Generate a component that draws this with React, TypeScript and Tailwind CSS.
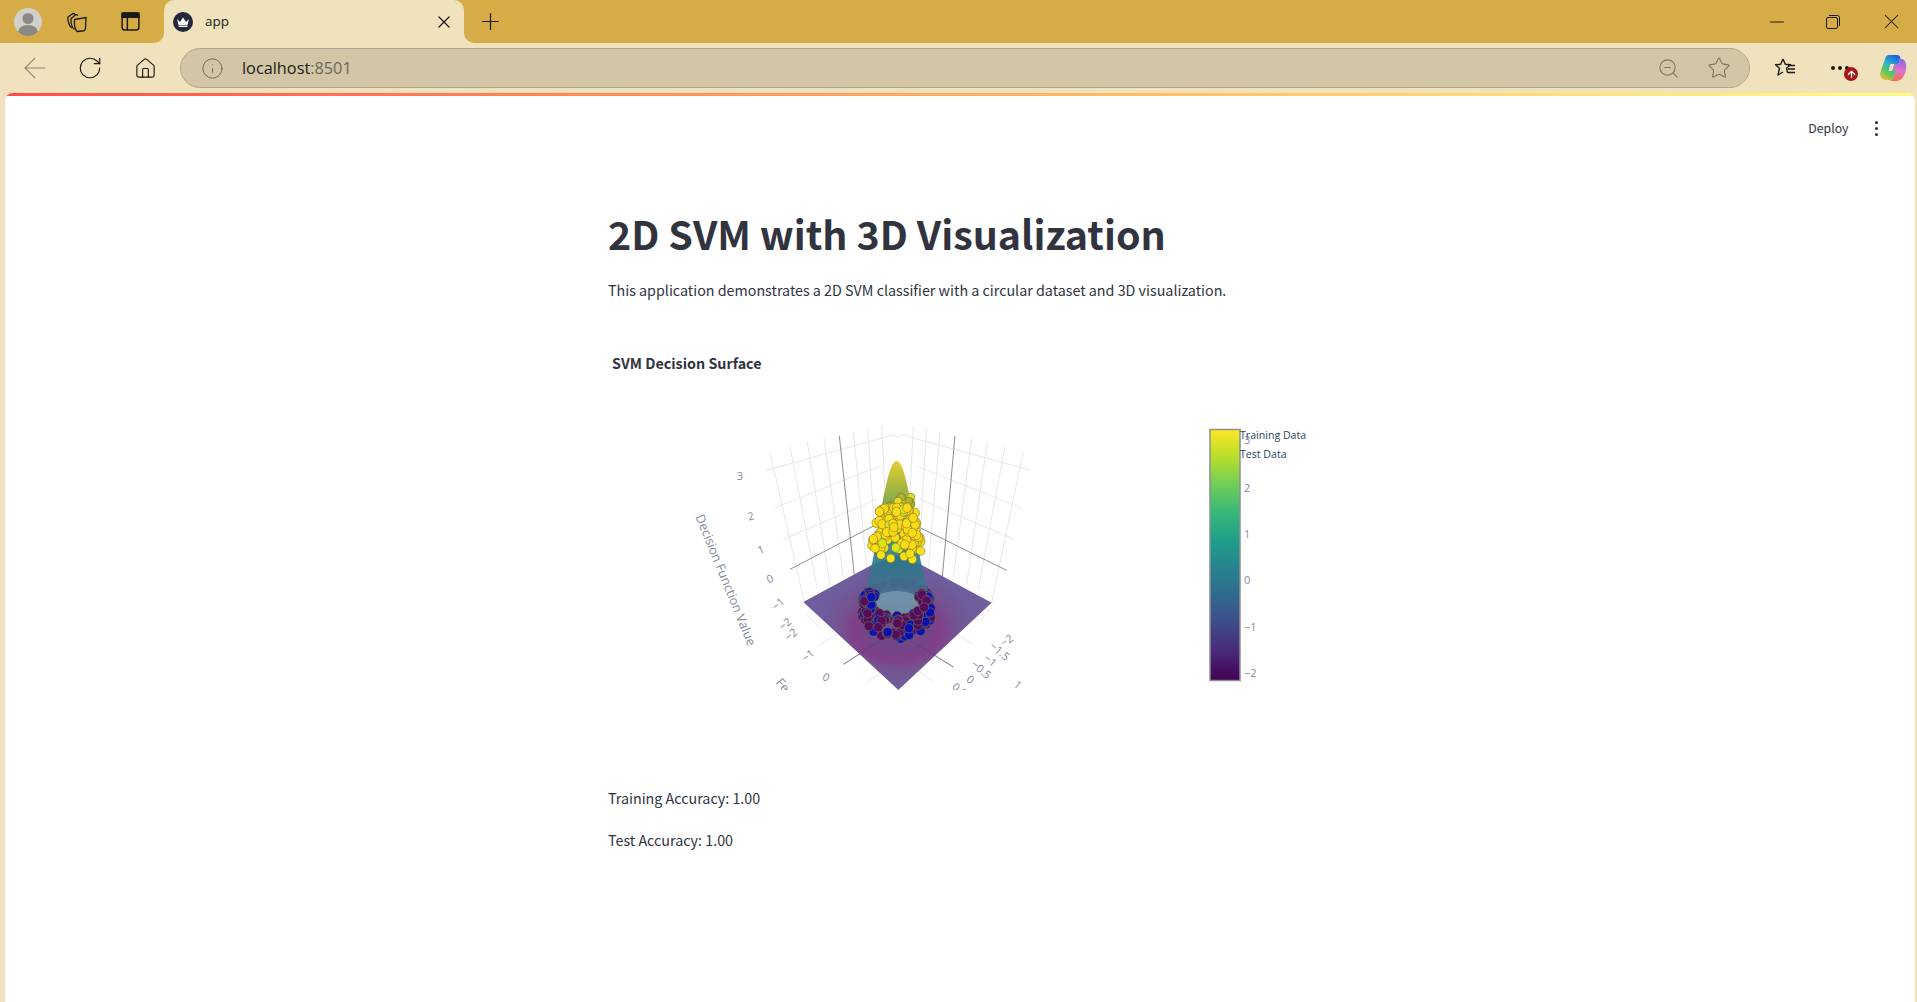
import { ArrowLeft, ArrowUp, Home, Info, Minus, Plus, RotateCw, Star, X, ZoomOut } from "lucide-react";

const viridis = ["#fde725", "#b5de2b", "#6ece58", "#35b779", "#1f9e89", "#26828e", "#31688e", "#3e4989", "#482878", "#440154"];

// small seeded generator so the scatter is the same on every load
function makeRandom(seed: number) {
  let s = seed;
  return () => {
    s = (s * 16807) % 2147483647;
    return (s - 1) / 2147483646;
  };
}

function coneHalf(y: number) {
  if (y < 150) return 0;
  if (y < 270) return 45 * Math.sqrt((y - 150) / 120);
  return 45 + ((y - 270) / 270) * 47;
}

const rnd = makeRandom(4242);
const yellowFaded = Array.from({ length: 12 }, () => {
  const y = 258 + rnd() * 28;
  return { x: 650 + (rnd() * 2 - 1) * 44, y };
});
const yellow = Array.from({ length: 135 }, () => {
  const y = 290 + Math.pow(rnd(), 1.2) * 125;
  const half = coneHalf(y) + 6;
  return { x: 650 + (rnd() * 2 - 1) * half, y, lime: rnd() > 0.88 };
});
const yellowLow = [
  [603, 432], [632, 442], [672, 436], [697, 445], [722, 420], [585, 412], [690, 428],
].map(([x, y]) => ({ x, y }));
const ringBack = Array.from({ length: 38 }, () => {
  const a = Math.PI * 0.98 + rnd() * Math.PI * 1.04;
  const r = 0.85 + rnd() * 0.2;
  return { x: 652 + Math.cos(a) * 100 * r, y: 565 + Math.sin(a) * 50 * r, blue: rnd() > 0.5 };
});
// band between the pale inner patch and the outer edge of the ring
const ringFront = Array.from({ length: 155 }, () => {
  const a = -0.7 + rnd() * (Math.PI + 1.4);
  const t = 0.05 + rnd() * 0.95;
  const x = 650 + Math.cos(a) * (72 + (108 - 72) * t);
  const y = 575 + 20 * t + Math.sin(a) * (35 + (92 - 35) * t);
  return { x, y, blue: rnd() > 0.6 };
});

type Tick = { t: string; x: number; y: number; r?: number };
const ticks: Tick[] = [
  { t: "3", x: 180, y: 208 },
  { t: "2", x: 213, y: 327, r: -15 },
  { t: "1", x: 243, y: 428, r: -20 },
  { t: "0", x: 270, y: 515, r: -20 },
  { t: "−1", x: 295, y: 590, r: -40 },
  { t: "−2", x: 316, y: 650, r: -40 },
  { t: "−2", x: 334, y: 682, r: -40 },
  { t: "−1", x: 385, y: 745, r: -40 },
  { t: "0", x: 438, y: 810, r: 30 },
  { t: "−2", x: 981, y: 700, r: -35 },
  { t: "−1.5", x: 958, y: 732, r: 40 },
  { t: "−1", x: 930, y: 760, r: 40 },
  { t: "−0.5", x: 903, y: 787, r: 40 },
  { t: "0", x: 870, y: 817, r: 40 },
  { t: "0.5", x: 838, y: 848, r: 40 },
  { t: "1", x: 1012, y: 833, r: 40 },
];

const gridLines = [
  // left wall, z levels
  [258, 178, 640, 72], [285, 290, 600, 165], [310, 385, 590, 265],
  // right wall, z levels
  [1052, 178, 668, 72], [1028, 293, 710, 165], [1003, 385, 720, 265],
  // left wall, uprights
  [270, 125, 372, 570], [330, 105, 412, 535], [382, 92, 450, 520], [432, 82, 490, 500], [520, 62, 560, 470], [563, 52, 590, 460], [605, 45, 625, 440],
  // right wall, uprights
  [1030, 122, 935, 575], [975, 105, 895, 535], [922, 92, 860, 520], [875, 82, 820, 500], [780, 62, 745, 470], [740, 52, 715, 460], [700, 45, 680, 440],
  // floor
  [380, 612, 420, 650], [418, 702, 470, 670], [560, 815, 625, 770], [935, 590, 900, 630], [880, 700, 830, 668], [760, 812, 700, 770],
  [640, 72, 655, 80], [668, 72, 655, 80],
];

const darkLines = [
  [478, 75, 525, 510], [825, 75, 785, 520], [330, 475, 580, 345], [720, 350, 980, 478],
];

function SurfacePlot() {
  return (
    <svg width="640" height="279" viewBox="0 0 640 279" className="block">
      <defs>
        <linearGradient id="bar" x1="0" y1="0" x2="0" y2="1">
          {viridis.map((c, i) => (
            <stop key={c} offset={i / 9} stopColor={c} />
          ))}
        </linearGradient>
        <linearGradient id="cone" x1="0" y1="150" x2="0" y2="570" gradientUnits="userSpaceOnUse">
          <stop offset="0" stopColor="#e3c81c" />
          <stop offset="0.2" stopColor="#98ad2b" />
          <stop offset="0.45" stopColor="#3f8f76" />
          <stop offset="0.7" stopColor="#27788a" />
          <stop offset="1" stopColor="#4f6f92" />
        </linearGradient>
        <radialGradient id="floor" cx="0.5" cy="0.55" r="0.55">
          <stop offset="0" stopColor="#6f4a88" />
          <stop offset="0.3" stopColor="#744488" />
          <stop offset="0.42" stopColor="#803f8a" />
          <stop offset="0.54" stopColor="#75528f" />
          <stop offset="0.75" stopColor="#6f5c9c" />
          <stop offset="1" stopColor="#6f5e9e" />
        </radialGradient>
        <clipPath id="scene">
          <rect x="0" y="0" width="1200" height="837" />
        </clipPath>
      </defs>

      <g transform="scale(0.33333)" clipPath="url(#scene)">
        {gridLines.map(([a, b, c, d], i) => (
          <line key={i} x1={a} y1={b} x2={c} y2={d} stroke="#e6e7ea" strokeWidth="3" />
        ))}
        {darkLines.map(([a, b, c, d], i) => (
          <line key={i} x1={a} y1={b} x2={c} y2={d} stroke="#8d8d92" strokeWidth="3" />
        ))}

        <polygon points="370,573 575,462 655,432 725,462 935,575 655,837" fill="url(#floor)" />
        <line x1="490" y1="760" x2="600" y2="690" stroke="#55486f" strokeWidth="3" opacity="0.8" />
        <line x1="820" y1="768" x2="710" y2="700" stroke="#55486f" strokeWidth="3" opacity="0.8" />

        {ringBack.map((p, i) => (
          <circle key={i} cx={p.x} cy={p.y} r="13" fill={p.blue ? "#0a10b0" : "#560a5c"} stroke="#5f5f55" strokeWidth="2" />
        ))}

        <path d="M650 150 C668 150 680 215 692 270 L722 450 L745 545 C745 590 555 590 555 545 L578 450 L608 270 C620 215 632 150 650 150 Z" fill="url(#cone)" opacity="0.9" />
        <ellipse cx="650" cy="576" rx="72" ry="36" fill="#7096aa" opacity="0.9" />

        {ringFront.map((p, i) => (
          <circle key={i} cx={p.x} cy={p.y} r="14" fill={p.blue ? "#0a10b0" : "#560a5c"} stroke="#6b6b55" strokeWidth="2" />
        ))}

        {yellowFaded.map((p, i) => (
          <circle key={i} cx={p.x} cy={p.y} r="12" fill={i % 3 === 0 ? "#e8dc22" : "#a9b32c"} stroke="#7c7c2c" strokeWidth="2" />
        ))}
        {yellow.map((p, i) => (
          <ellipse key={i} cx={p.x} cy={p.y} rx="13" ry="14" fill={p.lime ? "#d8e41c" : "#fbdc14"} stroke="#6a6630" strokeWidth="1.5" />
        ))}
        {yellowLow.map((p, i) => (
          <circle key={i} cx={p.x} cy={p.y} r="13" fill="#fbe014" stroke="#6a6630" strokeWidth="1.5" />
        ))}

        {ticks.map((k, i) => (
          <text key={i} x={k.x} y={k.y} fontSize="33" fill="#8289a0" textAnchor="middle" fontFamily="'Open Sans', sans-serif" transform={k.r ? `rotate(${k.r} ${k.x} ${k.y - 10})` : undefined}>
            {k.t}
          </text>
        ))}
        <text x="0" y="0" fontSize="38" fill="#8289a0" textAnchor="middle" fontFamily="'Open Sans', sans-serif" transform="translate(125 512) rotate(68)">
          Decision Function Value
        </text>
        <text x="0" y="0" fontSize="38" fill="#8289a0" fontFamily="'Open Sans', sans-serif" transform="translate(285 815) rotate(50)">
          Feature 1
        </text>
      </g>

      <rect x="530" y="18.5" width="30" height="251" fill="url(#bar)" stroke="#8f8f8f" strokeWidth="1.5" />
      {[
        ["3", 33],
        ["2", 81],
        ["1", 127],
        ["0", 173],
        ["−1", 220],
        ["−2", 266],
      ].map(([t, y]) => (
        <text key={t} x="564" y={y} fontSize="11" fill="#8289a0" fontFamily="'Open Sans', sans-serif">
          {t}
        </text>
      ))}
      <text x="560" y="28" fontSize="10.6" fill="#2a3f5f" fontFamily="'Open Sans', sans-serif">Training Data</text>
      <text x="560" y="47" fontSize="10.6" fill="#2a3f5f" fontFamily="'Open Sans', sans-serif">Test Data</text>
    </svg>
  );
}

function Collections() {
  return (
    <svg width="22" height="22" viewBox="0 0 22 22" fill="none" stroke="#1c1a14" strokeWidth="1.3">
      <path d="M6 17 C3 15 1.5 10 2 6 L7 2.5 L9 3" />
      <path d="M8.5 18.5 C6 17 4.5 12 5 7.5 L10 3.5 L12 4.5" />
      <path d="M8.5 8.5 L20 6.5 L19.5 17 C19.5 19 18 20 16 20 L11 20.5 C9 19 8 13 8.5 8.5 Z" />
    </svg>
  );
}

function VerticalTabs() {
  return (
    <svg width="21" height="21" viewBox="0 0 20 20" fill="none" stroke="#1c1a14" strokeWidth="1.4">
      <rect x="2" y="2" width="16" height="16" rx="2.5" />
      <rect x="2" y="2" width="16" height="4" fill="#1c1a14" />
      <path d="M7 6 V18" />
    </svg>
  );
}

function Favicon() {
  return (
    <svg width="20" height="20" viewBox="0 0 20 20">
      <circle cx="10" cy="10" r="10" fill="#24263a" />
      <path d="M4 7 L7 10 L10 5.5 L13 10 L16 7 L14.5 13 H5.5 Z" fill="#fff" />
      <rect x="5.5" y="13.6" width="9" height="1.4" fill="#fff" />
    </svg>
  );
}

function Avatar() {
  return (
    <svg width="28" height="28" viewBox="0 0 28 28">
      <defs>
        <clipPath id="avatar-clip">
          <circle cx="14" cy="14" r="14" />
        </clipPath>
      </defs>
      <circle cx="14" cy="14" r="14" fill="#d2d0cb" />
      <g clipPath="url(#avatar-clip)" fill="#8b8983">
        <circle cx="14" cy="10.5" r="5.5" />
        <ellipse cx="14" cy="24" rx="10" ry="7" />
      </g>
    </svg>
  );
}

function FavoritesIcon() {
  return (
    <svg width="22" height="22" viewBox="0 0 22 22" fill="none" stroke="#1c1a14" strokeWidth="1.4">
      <path d="M9 2 L11.3 7.3 L16.5 7.8 L12.5 11.2 L13.7 16 M9 2 L6.7 7.3 L1.5 7.8 L5.5 11.2 L4 18 L9 15" strokeLinejoin="round" />
      <path d="M14 8.5 H21 M14 12 H21 M14 15.5 H21" />
    </svg>
  );
}

function RestoreIcon() {
  return (
    <svg width="14" height="14" viewBox="0 0 14 14" fill="none" stroke="#1c1a14" strokeWidth="1">
      <rect x="0.5" y="2.5" width="11" height="11" rx="1.5" />
      <path d="M3 0.5 H11.5 C12.6 0.5 13.5 1.4 13.5 2.5 V11" />
    </svg>
  );
}

function CopilotIcon() {
  return (
    <svg width="28" height="28" viewBox="0 0 28 28">
      <defs>
        <linearGradient id="cp-a" x1="0.7" y1="0" x2="0.2" y2="1">
          <stop offset="0" stopColor="#1a62e0" />
          <stop offset="0.4" stopColor="#2fb4c8" />
          <stop offset="0.7" stopColor="#5ac85a" />
          <stop offset="1" stopColor="#f0b838" />
        </linearGradient>
        <linearGradient id="cp-b" x1="0.6" y1="0" x2="0.4" y2="1">
          <stop offset="0" stopColor="#8a6ae8" />
          <stop offset="0.5" stopColor="#e070d0" />
          <stop offset="1" stopColor="#f8703c" />
        </linearGradient>
      </defs>
      <path d="M10 1 H18 C20 1 21 2 21.5 4 L15 23 C14 25.5 12.5 26 10 26 H7 C2.5 26 0.5 22 1.5 18 L6 5 C6.8 2.5 8 1 10 1 Z M11.5 10 L9.5 17 H13 L15.5 10 Z" fill="url(#cp-a)" fillRule="evenodd" />
      <path d="M19 5 H22 C25 5 26.5 7 27 10 C27.6 14 27 18 25 21.5 C23.5 24.5 21 27 17 27 H9 C12.5 27 14 25 15 22 L17 16 H13.5 L16 10 H19.5 C20.5 8 20 6 19 5 Z" fill="url(#cp-b)" />
    </svg>
  );
}

export default function App() {
  return (
    <div className="flex h-screen flex-col overflow-hidden bg-[#efe2bd] font-['Open_Sans',sans-serif] text-[#1c1a14]">
      <div className="flex h-[43px] shrink-0 items-center bg-[#d5ac45]">
        <div className="flex w-[56px] justify-center">
          <Avatar />
        </div>
        <div className="flex w-[42px] justify-center">
          <Collections />
        </div>
        <div className="mr-[2px] flex w-[64px] justify-center">
          <VerticalTabs />
        </div>
        <div className="relative flex h-full w-[300px] items-center rounded-t-[10px] bg-[#efe2bd] pl-[9px] pr-[10px]">
          <span className="absolute bottom-0 left-[-10px] h-[10px] w-[10px] bg-[#efe2bd]">
            <span className="block h-full w-full rounded-br-[10px] bg-[#d5ac45]" />
          </span>
          <span className="absolute bottom-0 right-[-10px] h-[10px] w-[10px] bg-[#efe2bd]">
            <span className="block h-full w-full rounded-bl-[10px] bg-[#d5ac45]" />
          </span>
          <Favicon />
          <span className="ml-[12px] flex-1 text-[13.5px]">app</span>
          <X size={20} strokeWidth={1.5} />
        </div>
        <div className="ml-[13px] flex w-[27px] justify-center">
          <Plus size={27} strokeWidth={1.1} />
        </div>
        <div className="flex-1" />
        <div className="flex items-center pr-[13.5px]">
          <Minus size={22} strokeWidth={1.2} className="mr-[38.5px]" />
          <div className="mr-[38.5px]">
            <RestoreIcon />
          </div>
          <X size={25} strokeWidth={1} />
        </div>
      </div>

      <div className="flex h-[50px] shrink-0 items-center">
        <div className="flex w-[70px] justify-center">
          <ArrowLeft size={34} strokeWidth={0.8} className="text-[#8f8872]" />
        </div>
        <div className="flex w-[40px] justify-center">
          <RotateCw size={26} strokeWidth={1.1} />
        </div>
        <div className="flex w-[70px] justify-center">
          <Home size={23} strokeWidth={1.2} />
        </div>
        <div className="flex h-[40px] w-[1570px] items-center rounded-full border border-[#b2a78c] bg-[#d3c6a6] pl-[19.5px] pr-[18px]">
          <Info size={23} strokeWidth={1} className="text-[#6e6a5c]" />
          <span className="ml-[18.5px] flex-1 text-[16.3px]">
            localhost<span className="text-[#6b685c]">:8501</span>
          </span>
          <ZoomOut size={23} strokeWidth={1.1} className="mr-[27.5px] text-[#7b7768]" />
          <Star size={24} strokeWidth={1.1} className="text-[#7b7768]" />
        </div>
        <div className="ml-[23px] flex w-[24px] justify-center">
          <FavoritesIcon />
        </div>
        <div className="relative ml-[31px] flex w-[24px] justify-center gap-[3.5px]">
          <span className="h-[3.5px] w-[3.5px] rounded-full bg-[#1c1a14]" />
          <span className="h-[3.5px] w-[3.5px] rounded-full bg-[#1c1a14]" />
          <span className="h-[3.5px] w-[3.5px] rounded-full bg-[#1c1a14]" />
          <span className="absolute left-[16px] top-[1px] flex h-[14px] w-[14px] items-center justify-center rounded-full bg-[#a81515] text-white">
            <ArrowUp size={11} strokeWidth={2.6} />
          </span>
        </div>
        <div className="ml-[27px]">
          <CopilotIcon />
        </div>
      </div>

      <div className="ml-[5px] mr-[2px] flex flex-1 flex-col overflow-hidden rounded-t-[8px] bg-white font-['Noto_Sans_CJK_SC',sans-serif] text-[#31333f]">
        <div className="h-[3px] shrink-0 bg-gradient-to-r from-[#ff4b4b] to-[#fffd80]" />
        <div className="flex h-[65px] shrink-0 items-center justify-end pr-[37px]">
          <span className="mr-[26px] text-[12.3px]">Deploy</span>
          <div className="flex flex-col gap-[2.5px]">
            <span className="h-[3.5px] w-[3.5px] rounded-full bg-[#31333f]" />
            <span className="h-[3.5px] w-[3.5px] rounded-full bg-[#31333f]" />
            <span className="h-[3.5px] w-[3.5px] rounded-full bg-[#31333f]" />
          </div>
        </div>
        <div className="pl-[603px]">
          <h1 className="mt-[48px] text-[39.4px] font-bold leading-[1.2]">2D SVM with 3D Visualization</h1>
          <p className="mt-[22px] text-[14.3px] leading-[24px]">This application demonstrates a 2D SVM classifier with a circular dataset and 3D visualization.</p>
          <p className="ml-[4px] mt-[48.5px] text-[14.3px] font-bold leading-[24px]">SVM Decision Surface</p>
          <div className="ml-[72px] mt-[36px]">
            <SurfacePlot />
          </div>
          <p className="mt-[96px] text-[14.3px] leading-[24px]">Training Accuracy: 1.00</p>
          <p className="mt-[18px] text-[14.3px] leading-[24px]">Test Accuracy: 1.00</p>
        </div>
      </div>
    </div>
  );
}
